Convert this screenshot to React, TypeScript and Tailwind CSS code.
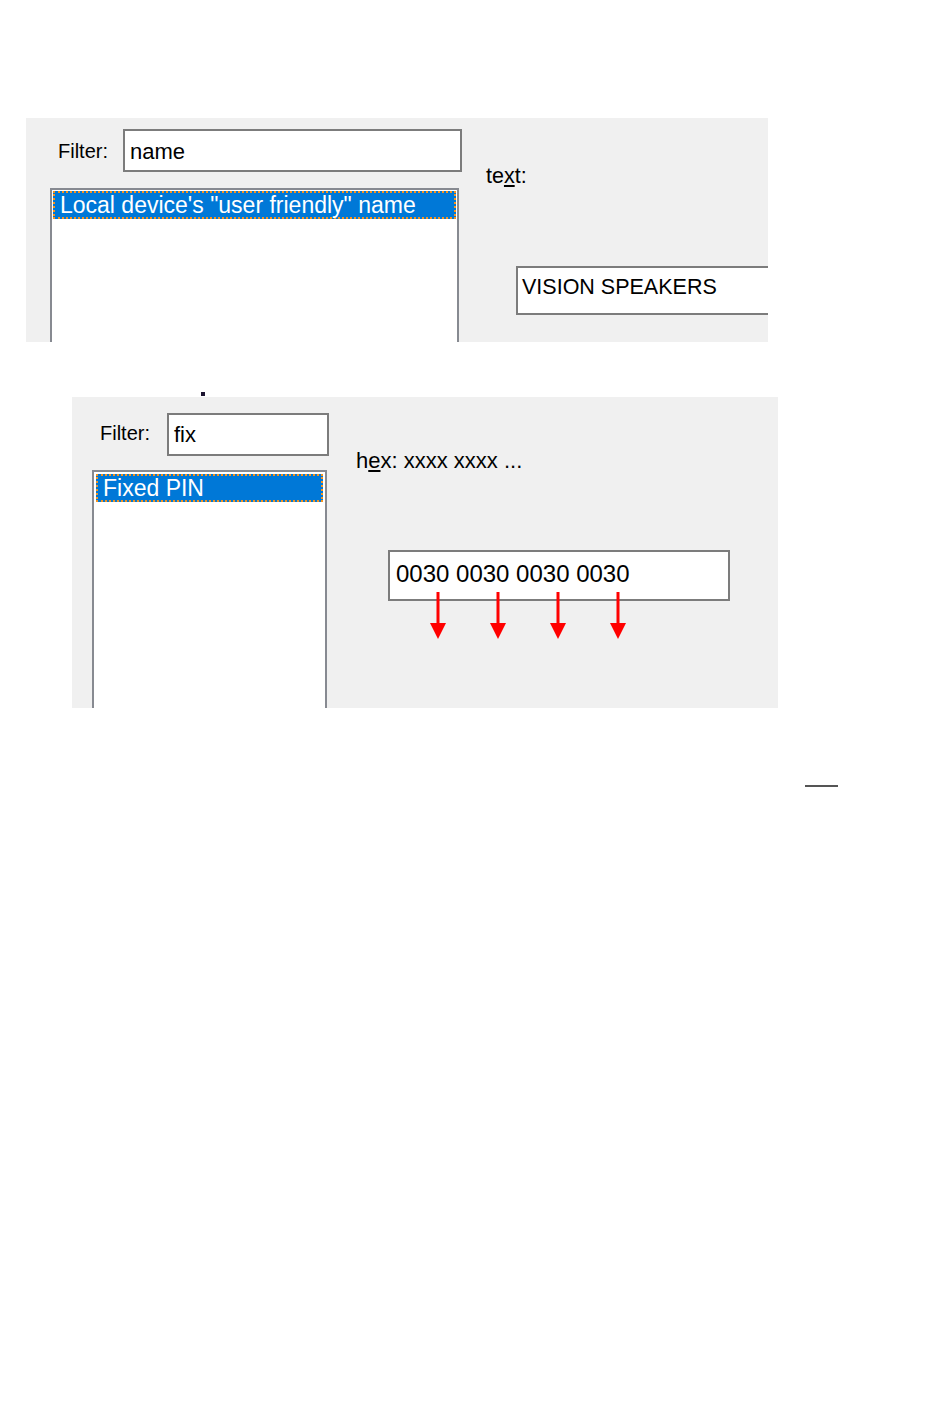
import type { ReactNode } from "react"

interface ListBoxProps {
  item: string
  size: string
}

// listbox is taller than the panel on purpose: the panel clips it, like the cropped original
function ListBox({ item, size }: ListBoxProps) {
  return (
    <div className={`${size} shrink-0 border-2 border-[#878a91] bg-white`}>
      <div className="h-[28px] border-2 border-dotted border-[#f7931e] bg-[#0078d7] pl-[5px] pt-px text-[23px] leading-[22px] text-white whitespace-nowrap">
        {item}
      </div>
    </div>
  )
}

function TextBox({ className, children }: { className: string; children: ReactNode }) {
  return (
    <div className={`border-2 border-[#7c7c7c] bg-white whitespace-nowrap ${className}`}>
      {children}
    </div>
  )
}

function Arrows() {
  const xs = [50, 110, 170, 230]
  return (
    <svg className="absolute left-0 top-0 overflow-visible" width="342" height="92" viewBox="0 0 342 92">
      {xs.map((x) => (
        <g key={x} fill="#ff0000" stroke="#ff0000">
          <line x1={x} y1="42" x2={x} y2="76" strokeWidth="3" />
          <polygon points={`${x - 8},73 ${x + 8},73 ${x},89`} stroke="none" />
        </g>
      ))}
    </svg>
  )
}

export default function App() {
  return (
    <div className="w-[950px] h-[1402px] overflow-hidden bg-white font-['Liberation_Sans',Arial,sans-serif] text-black">
      {/* Name filter panel */}
      <div className="ml-[26px] mt-[118px] flex h-[224px] w-[742px] overflow-hidden bg-[#f0f0f0]">
        <div className="flex w-[436px] shrink-0 flex-col pl-[24px] pt-[11px]">
          <div className="flex items-start">
            <span className="mt-[10px] w-[73px] pl-[8px] text-[20px] leading-[24px]">Filter:</span>
            <TextBox className="h-[43px] w-[339px] pl-[5px] pt-[8px] text-[22px] leading-[26px]">name</TextBox>
          </div>
          <div className="mt-[16px]">
            <ListBox item={'Local device\'s "user friendly" name'} size="w-[409px] h-[180px] p-px" />
          </div>
        </div>
        <div className="flex shrink-0 flex-col pl-[24px] pt-[45px]">
          <span className="text-[21.5px] leading-[26px]">
            te<span className="underline">x</span>t:
          </span>
          <TextBox className="ml-[30px] mt-[77px] h-[49px] w-[300px] pl-[4px] pt-[6px] text-[21.5px] leading-[26px]">
            VISION SPEAKERS
          </TextBox>
        </div>
      </div>

      <div className="ml-[201px] mt-[50px] h-[4px] w-[4px] bg-[#1c1430]" />

      {/* Hex / PIN panel */}
      <div className="ml-[72px] mt-px flex h-[311px] w-[706px] overflow-hidden bg-[#f0f0f0]">
        <div className="flex w-[257px] shrink-0 flex-col pl-[20px] pt-[16px]">
          <div className="flex items-start">
            <span className="mt-[8px] w-[75px] pl-[8px] text-[20px] leading-[24px]">Filter:</span>
            <TextBox className="h-[43px] w-[162px] pl-[5px] pt-[7px] text-[22px] leading-[26px]">fix</TextBox>
          </div>
          <div className="mt-[14px]">
            <ListBox item="Fixed PIN" size="w-[235px] h-[270px] p-[2px]" />
          </div>
        </div>
        <div className="flex shrink-0 flex-col pl-[27px] pt-[51px]">
          <span className="text-[22px] leading-[26px]">
            h<span className="underline">e</span>x: xxxx xxxx ...
          </span>
          <div className="relative ml-[32px] mt-[76px]">
            <TextBox className="h-[51px] w-[342px] pl-[6px] pt-[8px] text-[24px] leading-[28px]">
              0030 0030 0030 0030
            </TextBox>
            <Arrows />
          </div>
        </div>
      </div>

      <div className="ml-[805px] mt-[77px] h-[2px] w-[33px] bg-[#555555]" />
    </div>
  )
}
